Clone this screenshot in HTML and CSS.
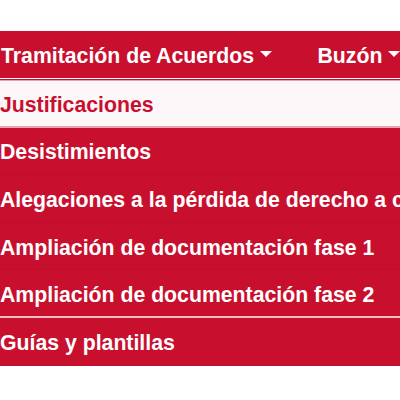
FILE: index.html
```html
<!DOCTYPE html>
<html lang="es">
<head>
<meta charset="utf-8">
<link rel="stylesheet" href="styles.css">
</head>
<body>
<nav class="navbar">
  <a class="nav-link dropdown-toggle first">Tramitación de Acuerdos</a>
  <a class="nav-link dropdown-toggle">Buzón</a>
</nav>
<div class="dropdown-menu">
  <a class="item active">Justificaciones</a>
  <a class="item">Desistimientos</a>
  <a class="item">Alegaciones a la pérdida de derecho a cobro</a>
  <a class="item">Ampliación de documentación fase 1</a>
  <a class="item">Ampliación de documentación fase 2</a>
  <div class="divider"></div>
  <a class="item">Guías y plantillas</a>
</div>
</body>
</html>
```

FILE: styles.css
```css
html, body {
  margin: 0;
  padding: 0;
  background: #ffffff;
  overflow: hidden;
}
body {
  width: 400px;
  height: 400px;
  font-family: "Liberation Sans", Arial, sans-serif;
  font-weight: bold;
  font-size: 21.25px;
}
.navbar {
  margin-top: 31px;
  height: 47px;
  box-sizing: border-box;
  padding-top: 2px;
  background: #c8102e;
  display: flex;
  align-items: center;
  white-space: nowrap;
  padding-left: 1px;
  gap: 46px;
}
.nav-link {
  color: #ffffff;
  line-height: 24px;
}
.dropdown-toggle::after {
  content: "";
  display: inline-block;
  margin-left: 0.255em;
  vertical-align: 0.255em;
  border-top: 0.3em solid;
  border-right: 0.3em solid transparent;
  border-left: 0.3em solid transparent;
  border-bottom: 0;
}
.dropdown-menu {
  border-top: 1px solid #ffffff;
  padding-top: 1px;
  background: #c8102e;
  white-space: nowrap;
  overflow: hidden;
}
.item {
  display: flex;
  align-items: center;
  height: 47.6px;
  box-sizing: border-box;
  padding-top: 4px;
  color: #ffffff;
  border-bottom: 1px solid #bf0e2b;
}
.item.active {
  background: #fdf7f9;
  color: #c8102e;
  border-top: 1px solid #e7a4b0;
  border-bottom: 2px solid #e7a4b0;
}
.divider {
  height: 2px;
  margin-top: -2px;
  background: #f0bcc5;
}
```
